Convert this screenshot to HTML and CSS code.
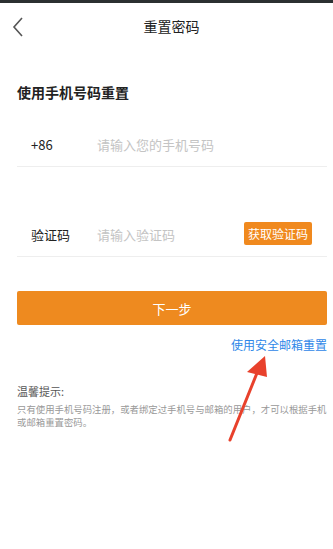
FILE: index.html
```html
<!DOCTYPE html>
<html lang="zh-CN">

<head>
    <meta charset="UTF-8">
    <meta name="viewport" content="width=device-width, initial-scale=1.0">
    <title>重置密码</title>
    <link rel="stylesheet" href="styles.css">
</head>

<body>
    <div class="status-bar"></div>
    <div class="nav-bar">
        <svg class="back" width="12" height="20" viewBox="0 0 12 20">
            <path d="M10 1 L2 10 L10 19" fill="none" stroke="#555" stroke-width="1.6" />
        </svg>
        <span class="nav-title">重置密码</span>
    </div>

    <div class="content">
        <h1 class="section-title">使用手机号码重置</h1>

        <div class="field field-phone">
            <span class="field-label">+86</span>
            <span class="field-input">请输入您的手机号码</span>
        </div>

        <div class="field field-code">
            <span class="field-label">验证码</span>
            <span class="field-input">请输入验证码</span>
            <button class="code-btn">获取验证码</button>
        </div>

        <button class="next-btn">下一步</button>

        <div class="alt-link">使用安全邮箱重置</div>

        <div class="tips">
            <div class="tips-title">温馨提示:</div>
            <p class="tips-text">只有使用手机号码注册，或者绑定过手机号与邮箱的用户，才可以根据手机<br>或邮箱重置密码。</p>
        </div>
    </div>

    <!-- 红色箭头标注 -->
    <svg class="arrow" width="333" height="549" viewBox="0 0 333 549">
        <line x1="230" y1="440" x2="259" y2="368" stroke="#e8412c" stroke-width="3" stroke-linecap="round" />
        <polygon points="265,356 247,372 267,377" fill="#e8412c" />
    </svg>
</body>

</html>
```

FILE: styles.css
```css
body {
    margin: 0;
    padding: 0;
    background-color: #ffffff;
    font-family: "Noto Sans CJK SC", "Noto Sans", sans-serif;
    color: #222;
    width: 333px;
    height: 549px;
    overflow: hidden;
    position: relative;
}

.status-bar {
    height: 3px;
    background-color: #2b3031;
}

.nav-bar {
    height: 46px;
    display: flex;
    align-items: center;
    justify-content: center;
    padding-left: 10px;
    position: relative;
}

.back {
    position: absolute;
    left: 12px;
    top: 14px;
}

.nav-title {
    font-size: 14px;
    color: #222;
}

.content {
    padding: 0 6px 0 17px;
}

.section-title {
    margin: 33px 0 0 0;
    font-size: 14px;
    font-weight: bold;
    line-height: 20px;
}

.field {
    display: flex;
    align-items: center;
    border-bottom: 1px solid #eeeeee;
    padding-left: 14px;
    font-size: 13px;
}

.field-phone {
    margin-top: 21px;
    height: 43px;
}

.field-code {
    margin-top: 46px;
    height: 43px;
}

.field-label {
    width: 66px;
    color: #222;
}

.field-input {
    flex: 1;
    color: #c4c4c4;
}

.code-btn {
    background-color: #f0891e;
    color: #ffffff;
    border: none;
    border-radius: 2px;
    font-family: inherit;
    font-size: 12px;
    height: 23px;
    padding: 0 4px;
    margin-right: 15px;
    margin-top: -3px;
}

.next-btn {
    display: block;
    width: 310px;
    height: 34px;
    margin-top: 34px;
    background-color: #ee8a1f;
    color: #ffffff;
    border: none;
    border-radius: 2px;
    font-family: inherit;
    font-size: 13px;
}

.alt-link {
    text-align: right;
    width: 310px;
    margin-top: 11px;
    font-size: 12px;
    color: #2e87e8;
    line-height: 18px;
}

.tips {
    margin-top: 29px;
    width: 316px;
}

.tips-title {
    font-size: 11px;
    color: #555;
    line-height: 16px;
}

.tips-text {
    margin: 4px 0 0 0;
    font-size: 9.4px;
    color: #999;
    line-height: 12.5px;
    white-space: nowrap;
}

.arrow {
    position: absolute;
    left: 0;
    top: 0;
    pointer-events: none;
}
```
